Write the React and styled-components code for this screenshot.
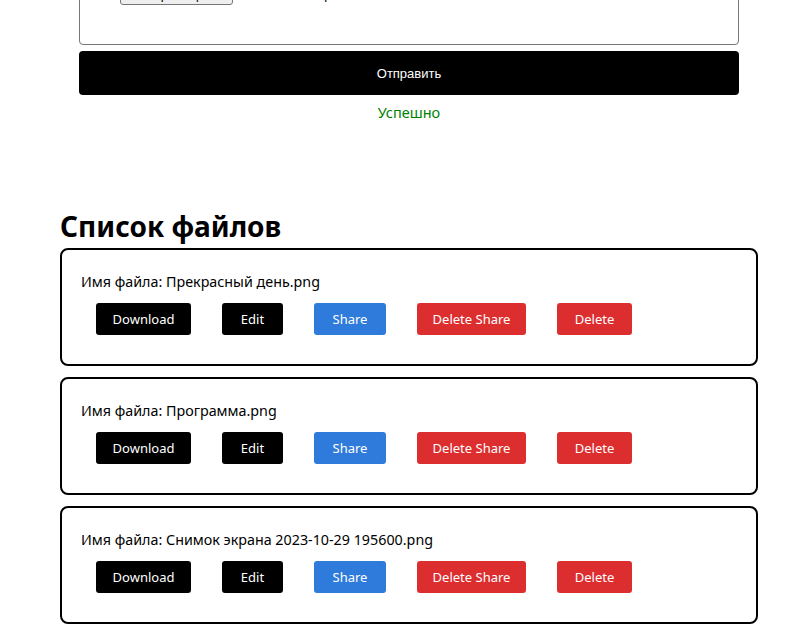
import styled, { createGlobalStyle } from "styled-components";

const files = [
  "Прекрасный день.png",
  "Программа.png",
  "Снимок экрана 2023-10-29 195600.png",
];

const actions = [
  { label: "Download", variant: "dark", width: 95 },
  { label: "Edit", variant: "dark", width: 61 },
  { label: "Share", variant: "blue", width: 72 },
  { label: "Delete Share", variant: "red", width: 109 },
  { label: "Delete", variant: "red", width: 75 },
];

const colors = {
  dark: "#000000",
  blue: "#2e7bdb",
  red: "#dd2e2f",
};

export default function App() {
  return (
    <>
      <GlobalStyle />
      <Page>
        <UploadForm>
          <FormBox>
            <FileRow>
              <FakeFileButton>Выберите файл</FakeFileButton>
              <FileHint>Файл не выбран</FileHint>
            </FileRow>
          </FormBox>
          <SubmitButton>Отправить</SubmitButton>
          <Status>Успешно</Status>
        </UploadForm>

        <Title>Список файлов</Title>
        {files.map((name) => (
          <FileCard key={name}>
            <FileName>Имя файла: {name}</FileName>
            <Actions>
              {actions.map((a) => (
                <ActionButton key={a.label} $variant={a.variant} $width={a.width}>
                  {a.label}
                </ActionButton>
              ))}
            </Actions>
          </FileCard>
        ))}
      </Page>
    </>
  );
}

const GlobalStyle = createGlobalStyle`
  body {
    margin: 0;
    background: #fff;
    color: #000;
    font-family: "Noto Sans", "Open Sans", sans-serif;
  }
`;

const Page = styled.div`
  width: 698px;
  margin-left: 60px;
`;

const UploadForm = styled.form`
  display: flex;
  flex-direction: column;
  margin: 0 19px;
`;

const FormBox = styled.div`
  margin-top: -55px;
  height: 100px;
  box-sizing: border-box;
  border: 1px solid #777;
  border-radius: 4px;
  padding: 38px 0 0 40px;
`;

const FileRow = styled.div`
  display: flex;
  align-items: center;
  gap: 14px;
  font-family: "Liberation Sans", Arial, sans-serif;
  font-size: 13px;
`;

const FakeFileButton = styled.span`
  display: inline-flex;
  align-items: center;
  justify-content: center;
  width: 113px;
  height: 21px;
  box-sizing: border-box;
  background: #efefef;
  border: 1px solid #767676;
  border-radius: 3px;
`;

const FileHint = styled.span``;

const SubmitButton = styled.button`
  margin-top: 6px;
  height: 44px;
  border: none;
  border-radius: 4px;
  background: #000;
  color: #fff;
  font-family: "Liberation Sans", Arial, sans-serif;
  font-size: 13px;
`;

const Status = styled.p`
  margin: 7px 0 0;
  text-align: center;
  color: #008000;
  font-size: 14.5px;
  line-height: 20px;
`;

const Title = styled.h2`
  margin: 86px 0 4px;
  font-size: 28px;
  line-height: 36px;
  font-weight: 700;
`;

const FileCard = styled.div`
  box-sizing: border-box;
  height: 118px;
  border: 2px solid #000;
  border-radius: 8px;
  padding: 21px 20px 0 19px;
  margin-bottom: 11px;
`;

const FileName = styled.p`
  margin: 0;
  font-size: 14.3px;
  line-height: 22px;
`;

const Actions = styled.div`
  display: flex;
  gap: 31px;
  padding: 10px 0 0 15px;
`;

const ActionButton = styled.button`
  width: ${(p) => p.$width}px;
  height: 32px;
  padding: 0;
  border: none;
  border-radius: 3px;
  background: ${(p) => colors[p.$variant]};
  color: #fff;
  font-family: inherit;
  font-size: 13px;
`;
